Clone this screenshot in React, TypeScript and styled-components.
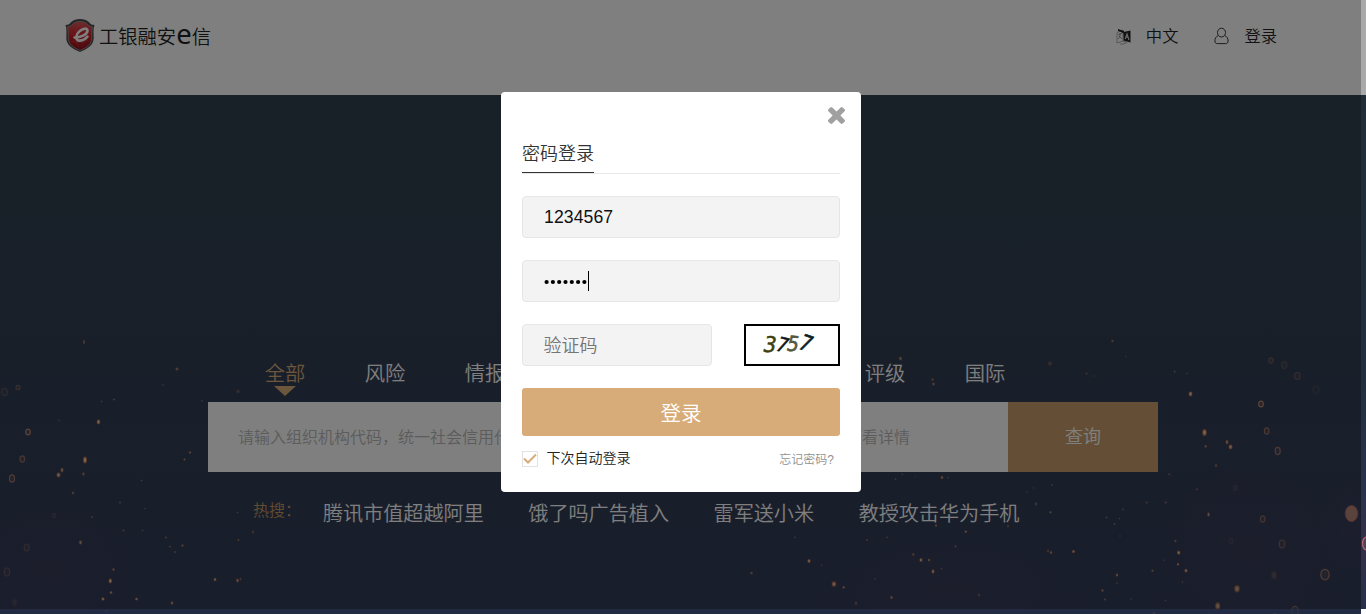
import React from 'react';
import styled, { createGlobalStyle } from 'styled-components';

const GlobalStyle = createGlobalStyle`
  * { box-sizing: border-box; }
  html, body { margin: 0; padding: 0; overflow: hidden; }
  body { font-family: "Liberation Sans", "Noto Sans CJK SC", sans-serif; font-weight: 350; color: #333; }
`;

const Page = styled.div`
  position: relative;
  width: 1366px;
  height: 614px;
  overflow: hidden;
  display: flex;
  flex-direction: column;
  background: #fff;
`;

const Header = styled.header`
  flex: 0 0 95px;
  padding: 17px 89px 0 64px;
  display: flex;
  justify-content: space-between;
  align-items: flex-start;
`;

const Brand = styled.div`
  display: flex;
  align-items: flex-start;
  height: 38px;
  color: #222;
`;

const BrandText = styled.span`
  display: flex;
  align-items: baseline;
  margin: 2px 0 0 3px;
  font-size: 19.3px;
  line-height: 36px;
  height: 36px;
  white-space: nowrap;
`;

const BrandE = styled.span`
  font-family: "Noto Sans", sans-serif;
  font-weight: 400;
  font-size: 27.5px;
  line-height: 30px;
`;

const HeaderNav = styled.nav`
  display: flex;
  gap: 36px;
  height: 38px;
`;

const HeaderLink = styled.a<{ $gap: number }>`
  display: flex;
  align-items: center;
  gap: ${(p) => p.$gap}px;
  font-size: 16.3px;
  line-height: 38px;
  color: #222;
`;

const Hero = styled.main`
  position: relative;
  flex: 1;
  padding: 262px 208px 0;
  background: linear-gradient(180deg, #304150 0%, #323f53 50%, #323d57 75%, #333c58 100%);
`;

const Sparks = styled.svg`
  position: absolute;
  left: 0;
  bottom: 0;
  width: 1366px;
  height: 294px;
`;

const HeroContent = styled.div`
  position: relative;
  width: 950px;
`;

const Tabs = styled.div`
  display: grid;
  grid-template-columns: repeat(8, 100px);
  height: 45px;
  padding-left: 27px;
`;

const Tab = styled.div<{ $column: number; $active?: boolean }>`
  grid-column: ${(p) => p.$column};
  grid-row: 1;
  display: flex;
  flex-direction: column;
  align-items: center;
  font-size: 20.3px;
  line-height: 29px;
  padding-top: 3px;
  color: ${(p) => (p.$active ? '#d8ac78' : '#fff')};
  &::after {
    content: "";
    display: ${(p) => (p.$active ? 'block' : 'none')};
    border: 11px solid transparent;
    border-top: 10px solid #d8ac78;
    border-bottom: 0;
    margin-top: -3px;
  }
`;

const SearchBar = styled.div`
  display: flex;
  height: 70px;
  background: #fff;
`;

const SearchField = styled.div`
  width: 800px;
  padding: 0 98px 0 30px;
  display: flex;
  justify-content: space-between;
  font-size: 16px;
  line-height: 72px;
  color: #b8b8b8;
`;

const SearchButton = styled.div`
  width: 150px;
  text-align: center;
  font-size: 18px;
  line-height: 71px;
  color: #fff;
  background: #c89f6d;
`;

const HotRow = styled.div`
  display: flex;
  align-items: flex-start;
  padding: 27px 0 0 45px;
`;

const HotLabel = styled.span`
  width: 70px;
  font-size: 16px;
  line-height: 24px;
  color: #c49862;
`;

const HotLinks = styled.div`
  display: flex;
  gap: 44.6px;
  font-size: 20.1px;
  line-height: 30px;
  color: #fff;
`;

const Shade = styled.div`
  position: absolute;
  left: 0;
  top: 0;
  width: 1361px;
  height: 609px;
  background: rgba(0, 0, 0, 0.5);
`;

const SideTrack = styled.div`
  position: absolute;
  right: 0;
  top: 0;
  width: 5px;
  height: 609px;
  background: linear-gradient(180deg, #a9a9a9 0 95px, #1e2d38 95px, #202f40 380px, #28334d 490px, #352f4a 540px, #26304a 609px);
`;

const BottomTrack = styled.div`
  position: absolute;
  left: 0;
  bottom: 0;
  width: 1361px;
  height: 5px;
  background: rgba(31, 40, 64, 0.85);
`;

const Corner = styled.div`
  position: absolute;
  right: 0;
  bottom: 0;
  width: 5px;
  height: 5px;
  background: #fff;
`;

const Dialog = styled.section`
  position: absolute;
  left: 501px;
  top: 92px;
  width: 360px;
  height: 400px;
  padding: 15px 21px 0;
  border-radius: 4px;
  background: #fff;
`;

const CloseRow = styled.div`
  display: flex;
  justify-content: flex-end;
  height: 17px;
  margin-right: -5px;
`;

const DialogTabs = styled.div`
  display: flex;
  height: 50px;
  margin-bottom: 22px;
  border-bottom: 1px solid #e8e8e8;
`;

const DialogTab = styled.span`
  height: 49px;
  padding-top: 14px;
  font-size: 18px;
  line-height: 32px;
  color: #333;
  border-bottom: 1px solid #333;
`;

const Field = styled.div<{ $width?: number; $muted?: boolean }>`
  display: flex;
  align-items: center;
  width: ${(p) => p.$width ?? 318}px;
  height: 42px;
  padding: 0 0 ${(p) => (p.$muted ? 3 : 0)}px ${(p) => (p.$muted ? 20.5 : 21)}px;
  border: 1px solid #e6e6e6;
  border-radius: 4px;
  background: #f3f3f3;
  font-size: 18px;
  color: ${(p) => (p.$muted ? '#757575' : '#000')};
`;

const Fields = styled.div`
  display: flex;
  flex-direction: column;
  gap: 22px;
`;

const Digits = styled.span`
  font-size: 17.6px;
  font-weight: 400;
  letter-spacing: 0.1px;
  color: #111;
`;

const PasswordDots = styled.svg`
  display: block;
  width: 44px;
  height: 6px;
  margin-top: 1px;
`;

const Caret = styled.i`
  width: 1px;
  height: 20px;
  background: #000;
`;

const CodeRow = styled.div`
  display: flex;
  justify-content: space-between;
`;

const Captcha = styled.div`
  width: 96px;
  height: 42px;
  border: 2px solid #000;
`;

const LoginButton = styled.div`
  height: 48px;
  border-radius: 3px;
  background: #d8ac78;
  color: #fff;
  font-size: 20.5px;
  line-height: 51px;
  text-align: center;
`;

const DialogFooter = styled.div`
  display: flex;
  align-items: center;
  height: 16px;
  margin-top: 15px;
`;

const CheckBox = styled.span`
  display: flex;
  width: 16px;
  height: 16px;
  border: 1px solid #e3e3e3;
  margin-right: 8.5px;
`;

const Remember = styled.span`
  font-size: 14px;
  line-height: 16px;
  color: #222;
  margin-top: -2px;
`;

const Forgot = styled.span`
  margin: 1px 6px 0 auto;
  font-size: 12px;
  line-height: 16px;
  color: #909090;
`;

// x, y, rx, ry, opacity
type Spark = [number, number, number, number, number];

const solidSparks: Spark[] = [
  [84, 342, 1, 2.5, 0.5], [177, 369, 1.7, 1.7, 0.55], [98.5, 422, 1.8, 2.4, 1], [85, 460, 2, 3.6, 1],
  [62, 470, 1.5, 2.5, 0.75], [58.5, 475, 2, 2.4, 0.9], [83.5, 474, 1.3, 1.7, 0.6], [73, 493, 1.3, 1.7, 0.5],
  [190, 452.5, 1.2, 1.2, 0.7], [184.5, 459.5, 1.2, 1.3, 0.6], [141.5, 480.5, 1, 1, 0.5], [120, 502.5, 1.1, 1.1, 0.5],
  [114, 399.5, 1.1, 1.1, 0.5], [101.5, 401.5, 1, 1, 0.4], [59, 420.5, 1.2, 1.2, 0.25], [163, 385, 1.3, 1, 0.3],
  [202, 401, 1.1, 1, 0.4], [145, 508.5, 1, 1, 0.35], [92, 517, 1.1, 1.1, 0.4], [123.5, 530.5, 1.1, 1.2, 0.4],
  [142.5, 530.5, 1, 1, 0.4], [166, 537.5, 1.1, 1.1, 0.5], [80.5, 542.5, 1.6, 2.3, 0.65], [170, 546.5, 1, 1, 0.5],
  [182.5, 545.5, 1.2, 1.2, 0.6], [175, 552, 1.1, 1, 0.5], [113.5, 569.5, 1.3, 1.5, 0.6], [110.3, 581, 1.7, 2.4, 1],
  [111, 592.5, 1.4, 1.5, 0.75], [103, 599, 1.6, 1.8, 0.9], [136.5, 599, 1.5, 1.5, 0.75], [172, 603, 1.3, 1.8, 0.8],
  [215, 579.5, 1.4, 1.8, 0.9], [237.5, 580.5, 1.4, 2, 0.7], [240.5, 579, 1, 1.6, 0.4], [106.5, 611, 1.3, 1.3, 0.4],
  [237.5, 512.5, 1.1, 1, 0.4], [253, 532, 1.4, 1.8, 0.35], [238.5, 540, 1, 1.3, 0.5], [238, 391.5, 2, 2, 0.25],
  [900.5, 358.5, 1.6, 2, 0.6], [932.5, 379.5, 1.2, 1.4, 0.5], [933.5, 384, 1.3, 1.8, 0.6], [1050, 363.5, 2.3, 2.2, 0.25],
  [1112.5, 341, 1.4, 1.6, 0.45], [1086.5, 373.5, 1.2, 1.1, 0.4], [1094, 376, 0.8, 0.8, 0.3], [1126, 356.5, 0.9, 0.9, 0.25],
  [942, 477.5, 1.4, 1.8, 0.7], [902.5, 474.5, 0.9, 1, 0.4], [895.5, 479, 1, 1.1, 0.4], [915, 477, 0.8, 0.8, 0.3],
  [948, 477.5, 0.9, 1, 0.4], [1052, 485, 1, 1.1, 0.4], [1033.5, 487.8, 0.9, 1, 0.3], [1027, 492, 0.9, 1, 0.3],
  [1036, 504, 1.3, 1.9, 0.4], [1050.5, 512.3, 1.2, 1.2, 0.6], [1106.5, 517.5, 1, 1.1, 0.5], [1114.5, 524, 1, 1.1, 0.5],
  [1123, 509.5, 1, 1, 0.5], [1119.5, 518.5, 0.9, 0.9, 0.4], [1120, 536, 0.9, 0.9, 0.3], [936, 525.5, 1.1, 1.4, 0.65],
  [965.8, 531.7, 1.4, 1.4, 0.65], [1008, 526, 1.1, 1.5, 0.4], [955.5, 546.5, 1, 1.3, 0.5], [913.3, 554.5, 1.2, 1.7, 0.5],
  [921, 560, 1.6, 2, 0.9], [929, 560, 1.2, 1.6, 0.7], [933, 571.5, 1.4, 2.3, 0.9], [941.5, 568.5, 1, 1.1, 0.4],
  [867, 539.8, 1, 1.1, 0.5], [887, 537.3, 1, 1.1, 0.4], [795, 537.3, 1, 1, 0.4], [809, 561, 1.7, 2.1, 0.9],
  [751.5, 573, 1.5, 1.5, 0.5], [834, 584, 2.3, 2.7, 0.9], [843.7, 587.3, 1.2, 1.5, 0.7], [891.5, 597.5, 1.5, 1.8, 0.6],
  [856, 603.3, 1.2, 1.7, 0.4], [979, 595, 1.2, 1.6, 0.4], [821.5, 565, 0.9, 0.9, 0.35], [875, 579, 0.9, 0.9, 0.35],
  [1048, 551, 1, 1.5, 0.45], [1051, 552.5, 1.2, 1.8, 0.65], [1073.5, 551.5, 1.6, 1.5, 0.8], [1117, 575, 1.2, 1.8, 0.75],
  [1102.5, 590.5, 1.2, 1.2, 0.7], [1105, 599.5, 1.1, 1.1, 0.5], [1117, 583, 0.8, 0.9, 0.5], [1131, 599, 1, 1, 0.3],
  [1190.5, 394, 1.9, 2.4, 1], [1204.5, 432.5, 2.2, 3.6, 1], [1227, 442, 1.5, 2.5, 0.7], [1230.5, 447, 2, 2.4, 0.9],
  [1205.7, 446.3, 1.3, 1.5, 0.6], [1216, 465.5, 1.2, 1.6, 0.5], [1174.7, 371.7, 1, 1.1, 0.5], [1187, 373.3, 0.9, 0.9, 0.35],
  [1169.3, 474.3, 1.1, 1, 0.5], [1197, 489.3, 1, 1, 0.5], [1146.7, 502.5, 1, 1.2, 0.4], [1165.7, 502.5, 1, 1.2, 0.5],
  [1208.5, 514.5, 1.3, 2.3, 0.7], [1175.5, 541, 1.1, 1.6, 0.5], [1178.7, 552.7, 1.7, 2.1, 0.95], [1178, 564.3, 1.2, 1.5, 0.75],
  [1186, 570.7, 1.6, 1.9, 0.9], [1152.5, 570.7, 1.2, 1.2, 0.6], [1182.5, 582, 1, 1.5, 0.3], [1165.5, 600.5, 1, 1, 0.4],
  [1237, 588.7, 2.8, 3.7, 0.75], [1217.7, 606, 2.6, 3.8, 0.75], [1274, 575.3, 3, 4.5, 0.2], [1164.5, 560.3, 1, 1, 0.3],
  [1154, 613, 1.5, 1.3, 0.8], [1275, 614, 2.5, 1.5, 0.5], [14.5, 602.5, 3, 4, 0.12],
];

const ringSparks: Spark[] = [
  [18, 387.5, 2, 2.2, 0.4], [4.5, 392, 3, 3.6, 0.25], [28, 432, 2.3, 2.9, 0.85], [22.3, 459, 2.3, 3.2, 0.6],
  [12, 478.5, 2.5, 3.6, 0.7], [26.7, 547.5, 2.5, 3.5, 0.3], [7, 572, 2.7, 4, 0.3], [54, 515.5, 1.5, 2.2, 0.2],
  [1271, 360.5, 2, 2.6, 0.35], [1284.3, 365, 2.5, 3.3, 0.25], [1297.3, 376, 2.8, 3.5, 0.35], [1316, 390, 3, 4, 0.12],
  [1261, 404, 2.3, 2.9, 0.85], [1266.7, 431, 2.3, 3.2, 0.6], [1277.7, 451, 2.5, 3.6, 0.65], [1235.3, 488, 1.6, 2.3, 0.2],
  [1262.7, 519, 2.3, 3.2, 0.5], [1282, 544, 2.8, 4, 0.45], [1231, 541, 1.8, 2.6, 0.15], [1325, 574.7, 4.2, 5.3, 0.7],
  [1295, 611, 3.4, 4.6, 0.55],
];

const LogoIcon = () => (
  <svg width="32" height="36" viewBox="0 0 32 36">
    <defs>
      <linearGradient id="shield" x1="0" y1="0" x2="0" y2="1">
        <stop offset="0" stopColor="#d85a5a" />
        <stop offset="0.45" stopColor="#d0222c" />
        <stop offset="1" stopColor="#8f1218" />
      </linearGradient>
    </defs>
    <path d="M16 2c3.500 0 7 1 9.500 3.500 1 1.800 2.500 2.500 5 2.500-1.500 4-.8 8-.8 13 0 7-6.200 11-13.700 14C8.500 32 2.300 28 2.300 21c0-5 .7-9-.8-13 2.500 0 4-.7 5-2.500C9 3 12.500 2 16 2z" fill="#4c4c4c" />
    <path d="M16 4.500c3.500 0 5.800 1 7.800 3.200C25 9 26.500 9.700 28.500 10c-.8 3.500-.8 7-.8 11 0 6-5 9.800-11.700 12.300C9.300 30.800 4.300 27 4.300 21c0-4 0-7.500-.8-11 2-.3 3.500-1 4.700-2.300 2-2.200 4.300-3.200 7.800-3.200z" fill="url(#shield)" stroke="#a4a4a4" strokeWidth=".7" />
    <path d="M7 17c5 2 13 2 18-1M8 24c5 2 11 2 16-1M15 8c-5 6-5 15 0 22M18 8c5 6 5 15-1 22" fill="none" stroke="#e88" strokeWidth=".5" opacity=".45" />
    <path d="M10.500 20.500c7 0 13-3.400 13-7 0-2.800-4.500-2.300-8 .7-4 3.400-4.500 9.200-.3 9.400 3.300.1 6-1.500 8.300-4" fill="none" stroke="#fff" strokeWidth="2.600" strokeLinecap="round" />
  </svg>
);

const LanguageIcon = () => (
  <svg width="17" height="17" viewBox="0 0 17 17">
    <path d="M2 4.500 8 2v11l-6 2zM8 13l4 1.500-4 1.500H5" fill="none" stroke="#999" strokeWidth=".8" />
    <path d="M3.500 6.500 7 5.500M5 5v2c0 2-1 3-2 4M4 8l3 3" fill="none" stroke="#777" strokeWidth=".8" />
    <path d="M3 1l6 2v2.500L3 2.800z" fill="#222" />
    <path d="M8.500 4 15.500 2.500v12l-7-2z" fill="#222" />
    <path d="m10.200 11 1.800-5 2 6M10.700 9.300h2.500" fill="none" stroke="#ddd" strokeWidth="1.100" />
  </svg>
);

const UserIcon = () => (
  <svg width="16" height="18" viewBox="0 0 16 18" fill="none" stroke="#3a3a44" strokeWidth="1">
    <ellipse cx="7.500" cy="5.600" rx="4" ry="4.400" />
    <path d="M4.200 8.600C1.900 9.600.9 11.600.9 14c0 1.600.8 2.600 2.400 2.600h8.400c1.600 0 2.400-1 2.400-2.600 0-2.400-1-4.400-3.300-5.400" />
  </svg>
);

const CloseIcon = () => (
  <svg width="17" height="17" viewBox="302 366 1188 1188">
    <path fill="#a0a0a0" d="M1490 1322q0 40-28 68l-136 136q-28 28-68 28t-68-28l-294-294-294 294q-28 28-68 28t-68-28l-136-136q-28-28-28-68t28-68l294-294-294-294q-28-28-28-68t28-68l136-136q28-28 68-28t68 28l294 294 294-294q28-28 68-28t68 28l136 136q28 28 28 68t-28 68l-294 294 294 294q28 28 28 68z" />
  </svg>
);

const CaptchaCode = () => (
  <svg width="92" height="38" viewBox="0 0 92 38" fontFamily="DejaVu Sans" fontSize="22" fontWeight="400" strokeWidth=".6">
    <text transform="translate(16 25.500) rotate(5) skewX(-8) scale(.9 1)" fill="#40400c" stroke="#40400c">3</text>
    <text transform="translate(28 24) rotate(14) skewX(-10) scale(.82 .92)" fill="#101418" stroke="#101418">7</text>
    <text transform="translate(39.500 24.500) rotate(5) skewX(-8) scale(.86 .96)" fill="#55583c" stroke="#55583c">5</text>
    <text transform="translate(50.500 22) rotate(19) skewX(-8) scale(.88 1)" fill="#0c2024" stroke="#0c2024">7</text>
  </svg>
);

const tabs = [
  { label: '全部', column: 1 },
  { label: '风险', column: 2 },
  { label: '情报', column: 3 },
  { label: '评级', column: 7 },
  { label: '国际', column: 8 },
];

const hotTopics = ['腾讯市值超越阿里', '饿了吗广告植入', '雷军送小米', '教授攻击华为手机'];

export default function App() {
  return (
    <Page>
      <GlobalStyle />
      <Header>
        <Brand>
          <LogoIcon />
          <BrandText>工银融安<BrandE>e</BrandE>信</BrandText>
        </Brand>
        <HeaderNav>
          <HeaderLink $gap={14}><LanguageIcon />中文</HeaderLink>
          <HeaderLink $gap={14}><UserIcon />登录</HeaderLink>
        </HeaderNav>
      </Header>
      <Hero>
        <Sparks viewBox="0 320 1366 294">
          <defs>
            <radialGradient id="haze">
              <stop offset="0" stopColor="#5a3f5c" stopOpacity=".13" />
              <stop offset="1" stopColor="#5a3f5c" stopOpacity="0" />
            </radialGradient>
          </defs>
          <ellipse cx="50" cy="570" rx="110" ry="90" fill="url(#haze)" />
          <ellipse cx="950" cy="590" rx="160" ry="70" fill="url(#haze)" />
          <ellipse cx="1250" cy="550" rx="120" ry="120" fill="url(#haze)" />
          <ellipse cx="1352" cy="520" rx="30" ry="60" fill="url(#haze)" />
          {solidSparks.map(([x, y, rx, ry, o], i) => (
            <g key={i} opacity={o}>
              <ellipse cx={x} cy={y} rx={rx} ry={ry} fill="#b86f55" />
              <ellipse cx={x} cy={y} rx={rx * 0.6} ry={ry * 0.6} fill="#f2c48e" />
            </g>
          ))}
          {ringSparks.map(([x, y, rx, ry, o], i) => (
            <ellipse key={i} cx={x} cy={y} rx={rx} ry={ry} fill="#c98a6a" fillOpacity=".2" stroke="#d09074" strokeWidth="1.200" opacity={o} />
          ))}
          <ellipse cx="1351.500" cy="513.500" rx="6.300" ry="8" fill="#b6867a" stroke="#a8605c" />
        </Sparks>
        <HeroContent>
          <Tabs>
            {tabs.map((t) => (
              <Tab key={t.label} $column={t.column} $active={t.column === 1}>{t.label}</Tab>
            ))}
          </Tabs>
          <SearchBar>
            <SearchField>
              <span>请输入组织机构代码，统一社会信用代码</span>
              <span>查看详情</span>
            </SearchField>
            <SearchButton>查询</SearchButton>
          </SearchBar>
          <HotRow>
            <HotLabel>热搜：</HotLabel>
            <HotLinks>
              {hotTopics.map((t) => <span key={t}>{t}</span>)}
            </HotLinks>
          </HotRow>
        </HeroContent>
      </Hero>
      <Shade />
      <SideTrack>
        <svg width="5" height="609" viewBox="0 0 5 609">
          <ellipse cx="5.500" cy="543.500" rx="4" ry="6.500" fill="#574152" stroke="#ac6c72" strokeWidth="1.300" />
        </svg>
      </SideTrack>
      <BottomTrack />
      <Corner />
      <Dialog>
        <CloseRow><CloseIcon /></CloseRow>
        <DialogTabs><DialogTab>密码登录</DialogTab></DialogTabs>
        <Fields>
          <Field><Digits>1234567</Digits></Field>
          <Field>
            <PasswordDots viewBox="0 0 44 6">
              {Array.from({ length: 7 }, (_, i) => <circle key={i} cx={2.6 + i * 6.3} cy="3" r="2.100" />)}
            </PasswordDots>
            <Caret />
          </Field>
          <CodeRow>
            <Field $width={190} $muted>验证码</Field>
            <Captcha><CaptchaCode /></Captcha>
          </CodeRow>
          <LoginButton>登录</LoginButton>
        </Fields>
        <DialogFooter>
          <CheckBox>
            <svg width="14" height="14" viewBox="0 0 14 14" fill="none" stroke="#d8ac78" strokeWidth="2"><path d="m1 6.500 4 4L13 2.500" /></svg>
          </CheckBox>
          <Remember>下次自动登录</Remember>
          <Forgot>忘记密码?</Forgot>
        </DialogFooter>
      </Dialog>
    </Page>
  );
}
